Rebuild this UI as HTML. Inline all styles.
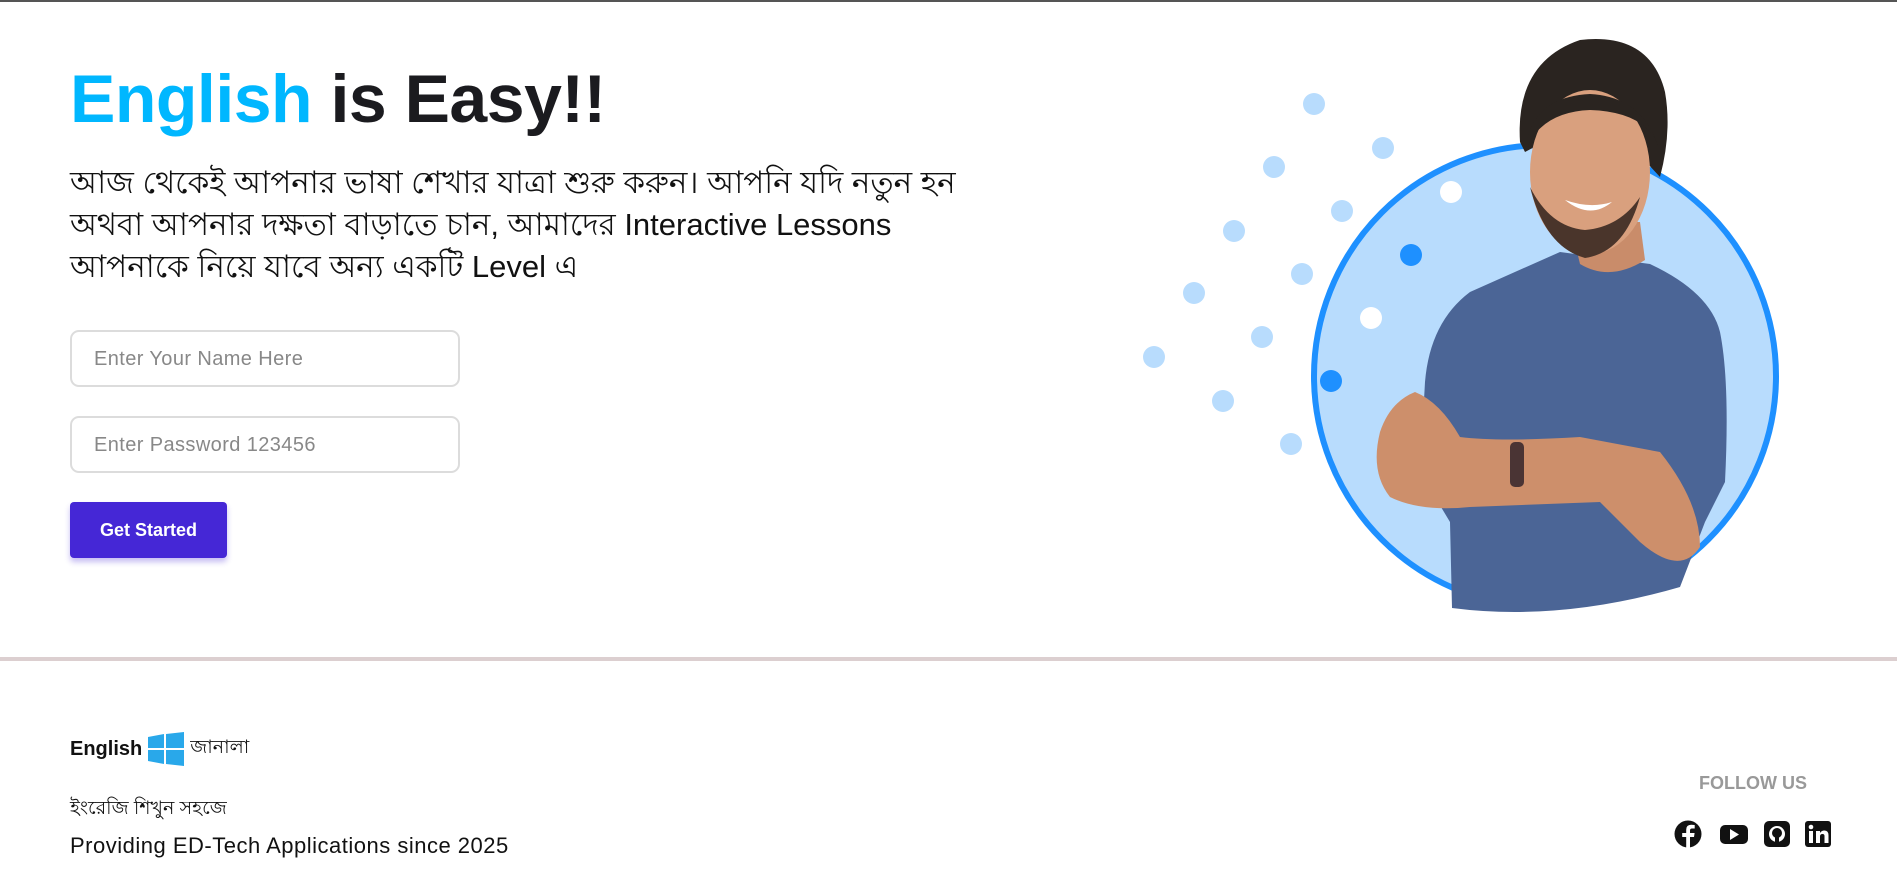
<!DOCTYPE html>
<html><head><meta charset="utf-8">
<style>
*{margin:0;padding:0;box-sizing:border-box}
body{width:1897px;height:872px;background:#fff;position:relative;overflow:hidden;font-family:"Liberation Sans",sans-serif;border-top:2px solid #555}
.abs{position:absolute}
h1{position:absolute;left:70px;top:58px;font-size:68px;font-weight:bold;color:#1b1b1f;letter-spacing:-0.5px;white-space:nowrap}
h1 span{color:#00b7ff}
.p{left:70px;top:160px;width:930px;font-size:31px;line-height:42px;color:#111;font-weight:normal}
.in{left:70px;width:390px;height:57px;border:2px solid #dcdcdc;border-radius:9px;font-size:20px;color:#888;padding:16px 0 0 22px;letter-spacing:0.4px}
.btn{left:70px;top:500px;width:157px;height:56px;background:#4527d6;border-radius:4px;color:#fff;font-weight:bold;font-size:18px;text-align:center;line-height:56px;box-shadow:0 4px 6px rgba(69,39,214,.3)}
.hr{left:0;top:655px;width:1897px;height:4px;background:#dccfd0}
</style></head><body>
<h1><span>English</span> is Easy!!</h1>
<div class="abs p">আজ থেকেই আপনার ভাষা শেখার যাত্রা শুরু করুন। আপনি যদি নতুন হন অথবা আপনার দক্ষতা বাড়াতে চান, আমাদের Interactive Lessons আপনাকে নিয়ে যাবে অন্য একটি Level এ</div>
<div class="abs in" style="top:328px">Enter Your Name Here</div>
<div class="abs in" style="top:414px">Enter Password 123456</div>
<div class="abs btn">Get Started</div>

<svg class="abs" style="left:0;top:0" width="1897" height="640">
<g fill="#b8dcfd">
<circle cx="1314" cy="102" r="11"/><circle cx="1383" cy="146" r="11"/><circle cx="1274" cy="165" r="11"/>
<circle cx="1342" cy="209" r="11"/><circle cx="1234" cy="229" r="11"/><circle cx="1302" cy="272" r="11"/>
<circle cx="1194" cy="291" r="11"/><circle cx="1262" cy="335" r="11"/><circle cx="1154" cy="355" r="11"/>
<circle cx="1223" cy="399" r="11"/><circle cx="1291" cy="442" r="11"/>
</g>
<circle cx="1545" cy="374" r="231" fill="#b8dcfd" stroke="#1e90ff" stroke-width="6"/>
<circle cx="1451" cy="190" r="11" fill="#fff"/>
<circle cx="1411" cy="253" r="11" fill="#1e90ff"/>
<circle cx="1371" cy="316" r="11" fill="#fff"/>
<circle cx="1331" cy="379" r="11" fill="#1e90ff"/>
<path d="M1560 250 L1470 290 Q1430 320 1425 380 L1420 470 L1450 520 L1452 606 Q1560 620 1680 585 L1705 520 L1725 480 Q1730 380 1720 330 Q1710 290 1650 262 Z" fill="#4b6596"/>
<path d="M1570 220 L1580 262 Q1610 280 1645 258 L1640 220 Z" fill="#c98c6a"/>
<path d="M1380 430 Q1370 470 1390 495 Q1420 510 1470 505 L1600 500 L1640 540 Q1680 575 1700 545 Q1700 500 1660 450 L1580 435 Q1500 440 1460 435 Q1440 400 1415 390 Q1390 400 1380 430 Z" fill="#cd8f6b"/>
<rect x="1510" y="440" width="14" height="45" rx="5" fill="#4a3434"/>
<path d="M1520 140 Q1515 60 1580 38 Q1650 30 1665 90 Q1672 130 1660 175 L1600 110 L1525 150 Z" fill="#2a2420"/>
<ellipse cx="1590" cy="170" rx="60" ry="82" fill="#d9a07e"/>
<path d="M1530 185 Q1545 245 1585 256 Q1625 250 1640 195 Q1620 225 1585 228 Q1550 225 1530 185Z" fill="#4a352b"/>
<path d="M1565 198 Q1590 218 1612 200 Q1590 207 1565 198Z" fill="#fff"/>
<path d="M1525 150 Q1530 95 1590 92 Q1645 95 1660 150 Q1650 110 1590 108 Q1540 110 1525 150Z" fill="#2a2420"/>
</svg>

<div class="abs hr"></div>

<div class="abs" style="left:70px;top:730px;font-size:20px;font-weight:bold;color:#111;display:flex;align-items:center;gap:6px">English
<svg width="36" height="34" viewBox="0 0 36 34"><path d="M0 5 L16 2 V16 H0Z M18 2 L36 0 V16 H18Z M0 18 H16 V32 L0 29Z M18 18 H36 V34 L18 32Z" fill="#29a8ea"/></svg>
<span style="font-weight:normal;font-size:19px">জানালা</span></div>
<div class="abs" style="left:70px;top:792px;font-size:19px;color:#111">ইংরেজি শিখুন সহজে</div>
<div class="abs" style="left:70px;top:831px;font-size:22px;color:#111;letter-spacing:0.5px">Providing ED-Tech Applications since 2025</div>

<div class="abs" style="left:1699px;top:771px;font-size:18px;font-weight:bold;color:#999">FOLLOW US</div>
<svg class="abs" style="left:1672px;top:817px" width="162" height="30">
<circle cx="16" cy="15" r="13.5" fill="#111"/>
<path d="M18 29 V18 h4 l.6-4 H18 v-2.5 q0-2 2-2 h2.7 V6 q-2-.3-3.5-.3 q-5 0-5 5 V14 h-4 v4 h4 v11Z" fill="#fff"/>
<rect x="48" y="6" width="28" height="19" rx="5" fill="#111"/>
<path d="M58 10 L67 15.5 L58 21Z" fill="#fff"/>
<rect x="92" y="2" width="26" height="26" rx="5" fill="#111"/>
<circle cx="105" cy="15" r="8" fill="#fff"/><circle cx="105" cy="14" r="5" fill="#111"/>
<rect x="103" y="17" width="4" height="6" fill="#111"/>
<rect x="133" y="2" width="26" height="26" rx="3" fill="#111"/>
<rect x="137" y="12" width="4" height="12" fill="#fff"/><circle cx="139" cy="8" r="2.3" fill="#fff"/>
<path d="M144 12 h4 v2 q1.5-2.5 4.5-2.5 q4 0 4 5 V24 h-4 v-7 q0-2-2-2 q-2.5 0-2.5 2.5 V24 h-4Z" fill="#fff"/>
</svg>
</body></html>
